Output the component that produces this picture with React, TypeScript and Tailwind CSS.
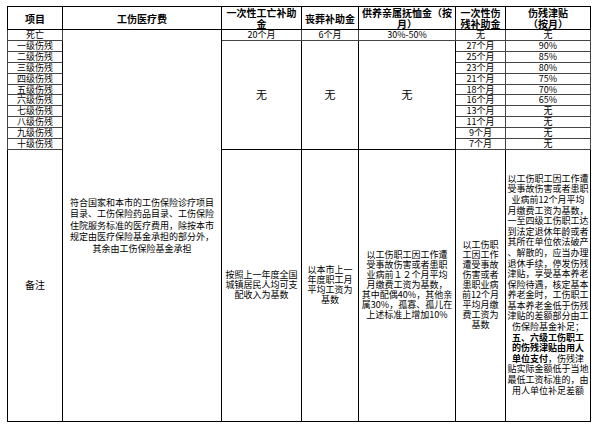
import React from 'react';

const grades = [
  { label: '一级伤残', lump: '27个月', allowance: '90%', h: 'h-[11px]' },
  { label: '二级伤残', lump: '25个月', allowance: '85%', h: 'h-[11px]' },
  { label: '三级伤残', lump: '23个月', allowance: '80%', h: 'h-[11px]' },
  { label: '四级伤残', lump: '21个月', allowance: '75%', h: 'h-[11px]' },
  { label: '五级伤残', lump: '18个月', allowance: '70%', h: 'h-[10px]' },
  { label: '六级伤残', lump: '16个月', allowance: '65%', h: 'h-[11px]' },
  { label: '七级伤残', lump: '13个月', allowance: '无', h: 'h-[11px]' },
  { label: '八级伤残', lump: '11个月', allowance: '无', h: 'h-[11px]' },
  { label: '九级伤残', lump: '9个月', allowance: '无', h: 'h-[11px]' },
  { label: '十级伤残', lump: '7个月', allowance: '无', h: 'h-[9px]' },
];

const cell = 'border border-black p-0 text-center align-middle';
const small = 'border border-[#444] p-0 text-center align-middle text-[9px] leading-[9.5px]';

function Lines({ lines }: { lines: string[] }) {
  return (
    <>
      {lines.map((l, i) => (
        <div key={i}>{l}</div>
      ))}
    </>
  );
}

export default function App() {
  return (
    <div
      className="w-[600px] h-[425px] bg-white text-black pt-[6px] pl-[7px] overflow-hidden"
      style={{ fontFamily: '"Noto Sans CJK SC", "Noto Sans", sans-serif' }}
    >
      <table className="table-fixed border-collapse w-[583px] border border-black">
        <colgroup>
          <col className="w-[55px]" />
          <col className="w-[159px]" />
          <col className="w-[80px]" />
          <col className="w-[57px]" />
          <col className="w-[97px]" />
          <col className="w-[50px]" />
          <col className="w-[85px]" />
        </colgroup>
        <tbody>
          <tr className="h-[23px] font-bold text-[10px] leading-[11px]">
            <td className={cell}>项目</td>
            <td className={cell}>工伤医疗费</td>
            <td className={cell}><Lines lines={['一次性工亡补助', '金']} /></td>
            <td className={cell}>丧葬补助金</td>
            <td className={cell}><Lines lines={['供养亲属抚恤金（按', '月）']} /></td>
            <td className={`${cell} border-l-[#777]`}><Lines lines={['一次性伤', '残补助金']} /></td>
            <td className={cell}><Lines lines={['伤残津贴', '（按月）']} /></td>
          </tr>
          <tr className="h-[10px]">
            <td className={`${small} text-[9.5px]`}>死亡</td>
            <td rowSpan={12} className={`${cell} text-[9px] leading-[11.5px]`}>
              <Lines
                lines={[
                  '符合国家和本市的工伤保险诊疗项目',
                  '目录、工伤保险药品目录、工伤保险',
                  '住院服务标准的医疗费用，除按本市',
                  '规定由医疗保险基金承担的部分外，',
                  '其余由工伤保险基金承担',
                ]}
              />
            </td>
            <td className={small}>20个月</td>
            <td className={small}>6个月</td>
            <td className={small}>30%-50%</td>
            <td className={`${small} border-l-[#777] text-[9.5px]`}>无</td>
            <td className={`${small} text-[9.5px]`}>无</td>
          </tr>
          {grades.map((g, i) => (
            <tr key={g.label} className={g.h}>
              <td className={`${small} text-[9.5px]`}>{g.label}</td>
              {i === 0 && (
                <>
                  <td rowSpan={10} className={`${cell} text-[11px]`}>无</td>
                  <td rowSpan={10} className={`${cell} text-[11px]`}>无</td>
                  <td rowSpan={10} className={`${cell} text-[11px]`}>无</td>
                </>
              )}
              <td className={`${small} border-l-[#777]`}>{g.lump}</td>
              <td className={`${small} ${g.allowance === '无' ? 'text-[9.5px]' : 'text-[8px]'}`}>{g.allowance}</td>
            </tr>
          ))}
          <tr className="h-[272px] text-[9px] leading-[10px]">
            <td className={`${cell} text-[10px]`}>备注</td>
            <td className={cell}>
              <Lines lines={['按照上一年度全国', '城镇居民人均可支', '配收入为基数']} />
            </td>
            <td className={cell}>
              <Lines lines={['以本市上一', '年度职工月', '平均工资为', '基数']} />
            </td>
            <td className={cell}>
              <Lines
                lines={[
                  '以工伤职工因工作遭',
                  '受事故伤害或者患职',
                  '业病前１２个月平均',
                  '月缴费工资为基数，',
                  '其中配偶40%，其他亲',
                  '属30%，孤寡、孤儿在',
                  '上述标准上增加10%',
                ]}
              />
            </td>
            <td className={`${cell} border-l-[#777]`}>
              <Lines
                lines={['以工伤职', '工因工作', '遭受事故', '伤害或者', '患职业病', '前12个月', '平均月缴', '费工资为', '基数']}
              />
            </td>
            <td className={`${cell} leading-[10.6px]`}>
              <Lines
                lines={[
                  '以工伤职工因工作遭',
                  '受事故伤害或者患职',
                  '业病前12个月平均',
                  '月缴费工资为基数，',
                  '一至四级工伤职工达',
                  '到法定退休年龄或者',
                  '其所在单位依法破产',
                  '、解散的，应当办理',
                  '退休手续，停发伤残',
                  '津贴，享受基本养老',
                  '保险待遇，核定基本',
                  '养老金时，工伤职工',
                  '基本养老金低于伤残',
                  '津贴的差额部分由工',
                  '伤保险基金补足；',
                ]}
              />
              <div className="font-bold">五、六级工伤职工</div>
              <div className="font-bold">的伤残津贴由用人</div>
              <div>
                <span className="font-bold">单位支付</span>，伤残津
              </div>
              <Lines lines={['贴实际金额低于当地', '最低工资标准的，由', '用人单位补足差额']} />
            </td>
          </tr>
        </tbody>
      </table>
    </div>
  );
}
